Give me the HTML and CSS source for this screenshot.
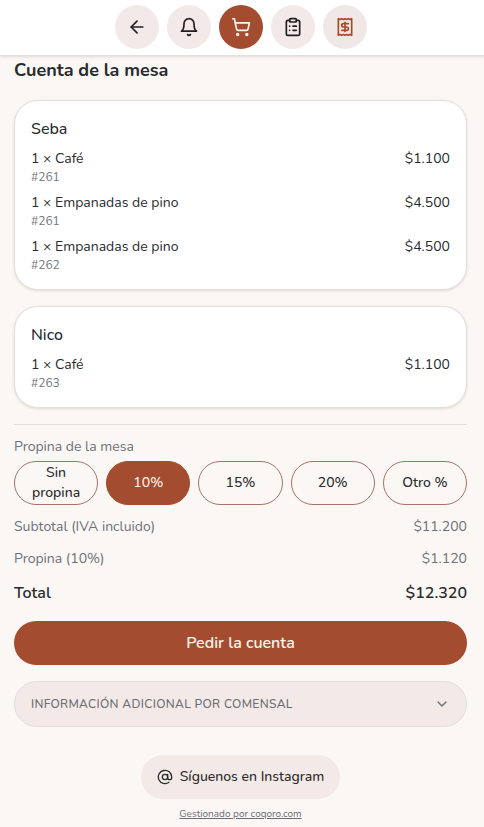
FILE: index.html
```html
<!DOCTYPE html>
<html lang="es">
<head>
<meta charset="utf-8">
<meta name="viewport" content="width=device-width, initial-scale=1">
<title>Cuenta de la mesa</title>
<link rel="stylesheet" href="styles.css">
</head>
<body>
<header class="topbar">
  <button class="nav" aria-label="Volver"><svg class="icon" viewBox="0 0 24 24"><path d="m12 19-7-7 7-7"/><path d="M19 12H5"/></svg></button>
  <button class="nav" aria-label="Llamar"><svg class="icon" viewBox="0 0 24 24"><path d="M6 8a6 6 0 0 1 12 0c0 7 3 9 3 9H3s3-2 3-9"/><path d="M10.3 21a1.94 1.94 0 0 0 3.4 0"/></svg></button>
  <button class="nav nav-active" aria-label="Carrito"><svg class="icon" viewBox="0 0 24 24"><circle cx="8" cy="21" r="1"/><circle cx="19" cy="21" r="1"/><path d="M2.05 2.05h2l2.66 12.42a2 2 0 0 0 2 1.58h9.78a2 2 0 0 0 1.95-1.57l1.65-7.43H5.12"/></svg></button>
  <button class="nav" aria-label="Pedidos"><svg class="icon" viewBox="0 0 24 24"><rect width="8" height="4" x="8" y="2" rx="1"/><path d="M16 4h2a2 2 0 0 1 2 2v14a2 2 0 0 1-2 2H6a2 2 0 0 1-2-2V6a2 2 0 0 1 2-2h2"/><path d="M12 11h4M12 16h4M8 11h.01M8 16h.01"/></svg></button>
  <button class="nav nav-current" aria-label="Cuenta"><svg class="icon" viewBox="0 0 24 24"><path d="M4 2v20l2-1 2 1 2-1 2 1 2-1 2 1 2-1 2 1V2l-2 1-2-1-2 1-2-1-2 1-2-1-2 1Z"/><path d="M16 8h-6a2 2 0 1 0 0 4h4a2 2 0 1 1 0 4H8"/><path d="M12 17.5v-11"/></svg></button>
</header>
<main class="page">
  <h1 class="title">Cuenta de la mesa</h1>
  <section class="card">
    <h2 class="guest">Seba</h2>
    <div class="item"><div><div>1 × Café</div><div class="order">#261</div></div><span>$1.100</span></div>
    <div class="item"><div><div>1 × Empanadas de pino</div><div class="order">#261</div></div><span>$4.500</span></div>
    <div class="item"><div><div>1 × Empanadas de pino</div><div class="order">#262</div></div><span>$4.500</span></div>
  </section>
  <section class="card">
    <h2 class="guest">Nico</h2>
    <div class="item"><div><div>1 × Café</div><div class="order">#263</div></div><span>$1.100</span></div>
  </section>
  <section class="summary">
    <p class="tip-label">Propina de la mesa</p>
    <div class="tips">
      <button class="tip">Sin propina</button>
      <button class="tip tip-selected">10%</button>
      <button class="tip">15%</button>
      <button class="tip">20%</button>
      <button class="tip">Otro %</button>
    </div>
    <div class="line"><span>Subtotal (IVA incluido)</span><span>$11.200</span></div>
    <div class="line"><span>Propina (10%)</span><span>$1.120</span></div>
    <div class="line total"><span>Total</span><span>$12.320</span></div>
  </section>
  <button class="request">Pedir la cuenta</button>
  <button class="details"><span>INFORMACIÓN ADICIONAL POR COMENSAL</span><svg class="icon small" viewBox="0 0 24 24"><path d="m6 9 6 6 6-6"/></svg></button>
  <footer class="footer">
    <a class="social"><svg class="icon small" viewBox="0 0 24 24"><circle cx="12" cy="12" r="4"/><path d="M16 8v5a3 3 0 0 0 6 0v-1a10 10 0 1 0-4 8"/></svg><span>Síguenos en Instagram</span></a>
    <a class="credit">Gestionado por coqoro.com</a>
  </footer>
</main>
</body>
</html>
```
FILE: styles.css
```css
* { box-sizing: border-box; }
body {
  margin: 0;
  background: #fbf7f4;
  color: #292b2e;
  font: 14px/20px Nunito, Lato, sans-serif;
}
h1, h2, p { margin: 0; }
button { margin: 0; padding: 0; border: 0; font: inherit; color: inherit; }
.icon { display: block; flex: none; width: 20px; height: 20px; fill: none; stroke: currentColor; stroke-width: 2; stroke-linecap: round; stroke-linejoin: round; }
.small { width: 16px; height: 16px; }
.topbar {
  display: flex;
  justify-content: center;
  gap: 8px;
  height: 56px;
  padding: 5px 2px 6px 0;
  background: #fff;
  border-bottom: 1px solid #e3dfdd;
  box-shadow: 0 1px 3px rgba(0, 0, 0, 0.12);
}
.nav { display: grid; place-items: center; width: 44px; height: 44px; border-radius: 50%; background: #f3e9e8; color: #231f20; }
.nav-active { background: #a44c30; color: #fff8f3; }
.nav-current { background: #efe8e6; color: #a9492d; }
.page { padding: 0 17px 0 14px; }
.title { padding: 0 0 16px; font-size: 18px; line-height: 28px; font-weight: 700; }
.card {
  display: flex;
  flex-direction: column;
  gap: 8px;
  margin-bottom: 16px;
  padding: 16px;
  background: #fff;
  border: 1px solid #e7dedb;
  border-radius: 24px;
  box-shadow: 0 1px 3px rgba(0, 0, 0, 0.12);
}
.guest { font-size: 16px; line-height: 24px; font-weight: 500; }
.item, .line { display: flex; justify-content: space-between; }
.order { font-size: 12px; line-height: 16px; color: #72777c; }
.summary { border-top: 1px solid #e5dfdc; padding-top: 12px; }
.tip-label, .line { color: #6e7177; }
.tip-label { margin-bottom: 4px; }
.tips { display: grid; grid-template-columns: repeat(5, 1fr); gap: 8px; margin-bottom: 12px; }
.tip { height: 44px; padding: 0 12px; border: 1px solid #a77368; border-radius: 22px; background: transparent; font-weight: 500; }
.tip-selected { border-color: #a44c30; background: #a44c30; color: #fff3ed; }
.line { margin-bottom: 12px; }
.total { margin-bottom: 16px; color: #292b2e; font-size: 16px; line-height: 24px; font-weight: 600; }
.request { display: block; width: 100%; height: 44px; border-radius: 22px; background: #a44c30; color: #fff5ef; font-size: 16px; font-weight: 600; }
.details { display: flex; align-items: center; justify-content: space-between; width: 100%; height: 46px; margin-top: 16px; padding: 0 16px; border: 1px solid #e6dcda; border-radius: 23px; background: #f3e9e7; color: #6b6e74; font-size: 12px; font-weight: 500; letter-spacing: 0.34px; }
.footer { display: flex; flex-direction: column; align-items: center; padding-top: 28px; }
.social { display: flex; align-items: center; justify-content: center; gap: 7px; width: 199px; height: 44px; border-radius: 22px; background: #f3eae7; font-weight: 500; }
.credit { margin-top: 8px; font-size: 10px; line-height: 15px; color: #6b6e74; text-decoration: underline; }
```
